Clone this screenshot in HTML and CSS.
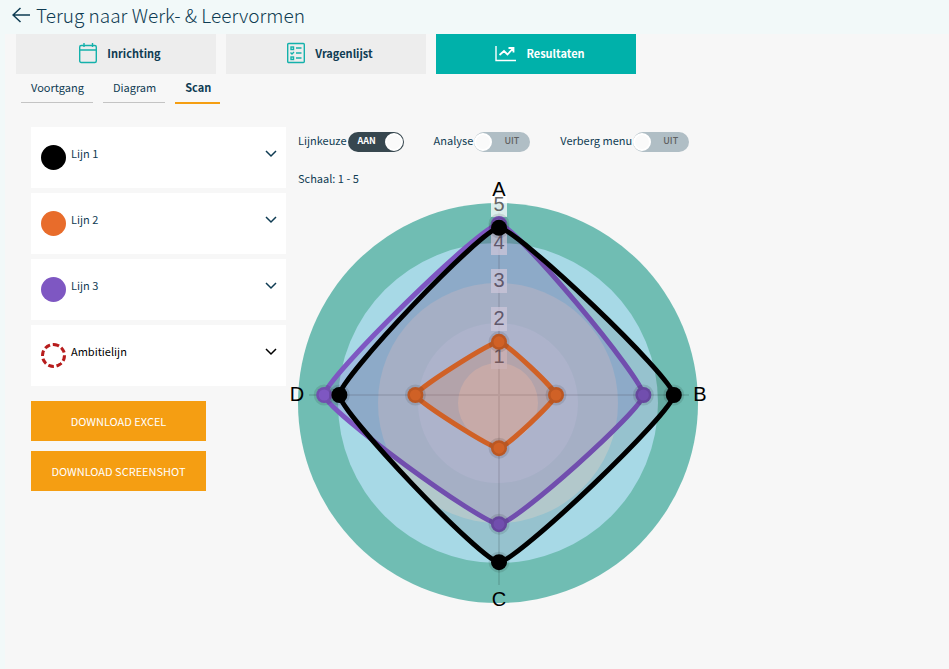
FILE: index.html
```html
<!DOCTYPE html>
<html lang="nl">
<head>
<meta charset="utf-8">
<meta name="viewport" content="width=device-width, initial-scale=1">
<title>Werk- &amp; Leervormen</title>
<link rel="stylesheet" href="styles.css">
</head>
<body>
<header class="topbar">
  <a class="back" href="#">
    <svg class="back-icon" viewBox="0 0 18 16" aria-hidden="true"><path d="M8.500 1 1 8l7.500 7M1 8h17"/></svg>
    <span>Terug naar Werk- &amp; Leervormen</span>
  </a>
</header>
<main class="page">
  <nav class="steps">
    <a class="step" href="#">
      <svg class="step-icon" viewBox="0 0 18 22" aria-hidden="true"><rect x=".7" y="3.500" width="16.600" height="17" rx="1.500"/><path d="M1 8h16M5 1v4M13.500 1v4"/></svg>
      Inrichting
    </a>
    <a class="step" href="#">
      <svg class="step-icon" viewBox="0 0 18 22" aria-hidden="true"><rect x=".7" y="1.500" width="16.600" height="19" rx="1"/><rect x="4" y="5" width="2.500" height="2.500"/><path d="M9 6h5.500M9 11h5.500M9 16h5.500M3.500 10.500l1.500 1.500 2-2"/><rect x="4" y="15" width="2.500" height="2.500"/></svg>
      Vragenlijst
    </a>
    <a class="step step-active" href="#" aria-current="page">
      <svg class="step-icon step-icon-wide" viewBox="0 0 21 18" aria-hidden="true"><path d="M1 2v14.500h20"/><path class="trend" d="M4.500 11 9 7l3.500 3.500L18 4.500M13.500 4H18.500v4.500"/></svg>
      Resultaten
    </a>
  </nav>
  <nav class="tabs">
    <a class="tab" href="#">Voortgang</a>
    <a class="tab" href="#">Diagram</a>
    <a class="tab tab-active" href="#" aria-current="page">Scan</a>
  </nav>
  <div class="content">
    <aside class="side">
      <button class="line" type="button"><span class="dot dot-black"></span><span class="line-name">Lijn 1</span><svg class="chevron" viewBox="0 0 12 8" aria-hidden="true"><path d="m1 1 5 5 5-5"/></svg></button>
      <button class="line" type="button"><span class="dot dot-orange"></span><span class="line-name">Lijn 2</span><svg class="chevron" viewBox="0 0 12 8" aria-hidden="true"><path d="m1 1 5 5 5-5"/></svg></button>
      <button class="line" type="button"><span class="dot dot-purple"></span><span class="line-name">Lijn 3</span><svg class="chevron" viewBox="0 0 12 8" aria-hidden="true"><path d="m1 1 5 5 5-5"/></svg></button>
      <button class="line line-dark" type="button"><span class="dot dot-ambition"></span><span class="line-name">Ambitielijn</span><svg class="chevron" viewBox="0 0 12 8" aria-hidden="true"><path d="m1 1 5 5 5-5"/></svg></button>
      <div class="actions">
        <button class="download" type="button">DOWNLOAD EXCEL</button>
        <button class="download" type="button">DOWNLOAD SCREENSHOT</button>
      </div>
    </aside>
    <section class="result">
      <div class="options">
        <label class="option">Lijnkeuze <span class="switch"><input type="checkbox" role="switch" checked><span class="on">AAN</span><span class="off">UIT</span></span></label>
        <label class="option">Analyse <span class="switch"><input type="checkbox" role="switch"><span class="on">AAN</span><span class="off">UIT</span></span></label>
        <label class="option">Verberg menu <span class="switch"><input type="checkbox" role="switch"><span class="on">AAN</span><span class="off">UIT</span></span></label>
      </div>
      <p class="scale">Schaal: 1 - 5</p>
      <svg id="radar" class="radar" viewBox="0 -10 430 440" role="img" aria-label="Radardiagram">
        <circle cx="212" cy="220" r="200" fill="#70bdb3"/>
        <circle cx="212" cy="220" r="160" fill="#a7d9e6"/>
        <circle cx="212" cy="220" r="120" fill="#c7dfe3"/>
        <circle cx="212" cy="220" r="80" fill="#d3e5eb"/>
        <circle cx="212" cy="220" r="40" fill="#f5f3e7"/>
        <path class="axis" d="M213 22v380M23 212h380"/>
        <g id="ticks"></g>
        <g class="names">
          <text x="213" y="13">A</text><text x="414" y="218">B</text><text x="213" y="423">C</text><text x="11" y="218">D</text>
        </g>
        <g id="series"></g>
      </svg>
    </section>
  </div>
</main>
<script src="radar.js"></script>
</body>
</html>
```
FILE: radar.js
```js
const NS = "http://www.w3.org/2000/svg";
const CENTER = { x: 213, y: 212 };
const UNIT = 38;
const TENSION = 0.1;

const series = [
  { color: "#7e57c2", fill: "rgba(126,87,194,.2)", width: 5, values: [4.5, 3.8, 3.4, 4.6] },
  { color: "#e86c2b", fill: "rgba(232,108,43,.2)", width: 5, values: [1.4, 1.5, 1.4, 2.2] },
  { color: "#000000", fill: "rgba(0,0,0,.1)", width: 5, values: [4.4, 4.6, 4.4, 4.2] }
];

function add(parent, name, attrs, text) {
  const node = document.createElementNS(NS, name);
  for (const key in attrs) node.setAttribute(key, attrs[key]);
  if (text) node.textContent = text;
  parent.appendChild(node);
}

function toPoint(value, i) {
  const angle = i * Math.PI / 2;
  return { x: CENTER.x + Math.sin(angle) * value * UNIT, y: CENTER.y - Math.cos(angle) * value * UNIT };
}

function controls(prev, cur, next) {
  const before = Math.hypot(cur.x - prev.x, cur.y - prev.y);
  const after = Math.hypot(next.x - cur.x, next.y - cur.y);
  const a = TENSION * before / (before + after);
  const b = TENSION * after / (before + after);
  return {
    into: { x: cur.x - a * (next.x - prev.x), y: cur.y - a * (next.y - prev.y) },
    out: { x: cur.x + b * (next.x - prev.x), y: cur.y + b * (next.y - prev.y) }
  };
}

function curve(points) {
  const n = points.length;
  const handles = points.map((p, i) => controls(points[(i + n - 1) % n], p, points[(i + 1) % n]));
  let d = `M${points[0].x} ${points[0].y}`;
  for (let i = 0; i < n; i++) {
    const j = (i + 1) % n;
    d += `C${handles[i].out.x} ${handles[i].out.y} ${handles[j].into.x} ${handles[j].into.y} ${points[j].x} ${points[j].y}`;
  }
  return d + "Z";
}

const ticks = document.getElementById("ticks");
for (let v = 1; v <= 5; v++) {
  const y = CENTER.y - v * UNIT;
  add(ticks, "rect", { class: "tick-back", x: CENTER.x - 8, y: y - 12, width: 16, height: 24 });
  add(ticks, "text", { class: "tick", x: CENTER.x, y: y + 6 }, String(v));
}

const layer = document.getElementById("series");
for (const s of series) {
  const points = s.values.map(toPoint);
  add(layer, "path", { d: curve(points), fill: s.fill, stroke: s.color, "stroke-width": s.width });
  for (const p of points) {
    add(layer, "circle", { class: "point", cx: p.x, cy: p.y, r: 8, fill: s.color });
  }
}
```
FILE: styles.css
```css
* { box-sizing: border-box; }

body {
  margin: 0;
  min-height: 100vh;
  background: #f2f9f9;
  color: #0f3c53;
  font: 11px/20px "Noto Sans CJK JP", "Noto Sans", sans-serif;
}

a { color: inherit; text-decoration: none; }
button { font: inherit; color: inherit; border: 0; cursor: pointer; }
svg { fill: none; stroke: currentColor; }

.topbar { height: 34px; padding: 0 12px 4px; display: flex; align-items: center; }
.back {
  display: flex;
  align-items: center;
  gap: 6px;
  font: 300 19px/28px "Noto Sans CJK JP Light", "Noto Sans CJK JP", sans-serif;
}
.back-icon { width: 18px; height: 16px; stroke-width: 1.5; }

.page { margin-left: 5px; min-height: calc(100vh - 34px); background: #f7f7f7; }

.steps { display: flex; gap: 10px; padding-left: 11px; }
.step {
  width: 200px;
  height: 40px;
  padding: 0 0 2px 8px;
  display: flex;
  align-items: center;
  justify-content: center;
  gap: 10px;
  background: #ededed;
  font-weight: 700;
}
.step-active { background: #00b1aa; color: #fff; }
.step-icon { width: 18px; height: 22px; color: #14b1ab; stroke-width: 1.4; }
.step-icon-wide { width: 21px; height: 18px; color: #fff; }
.trend { stroke-width: 1.8; }

.tabs { display: flex; align-items: flex-start; gap: 10px; padding-left: 16px; }
.tab { height: 29px; padding: 3px 9px 0 10px; border-bottom: 1px solid #c4c4c4; }
.tab-active { height: 30px; border-bottom: 2px solid #f59e12; font-weight: 700; }

.content { display: flex; align-items: flex-start; gap: 12px; padding: 23px 0 24px 26px; }

.side { width: 255px; flex: none; display: flex; flex-direction: column; gap: 5px; }
.line {
  height: 61px;
  padding: 0 9px 0 10px;
  display: flex;
  align-items: center;
  gap: 5px;
  background: #fff;
  text-align: left;
}
.line-dark { color: #000; }
.dot { width: 25px; height: 25px; border-radius: 50%; flex: none; }
.dot-black { background: #000; }
.dot-orange { background: #e86c2b; }
.dot-purple { background: #7e57c2; }
.dot-ambition { border: 3px dashed #b71c1c; }
.line-name { flex: 1; padding-bottom: 10px; }
.chevron { width: 12px; height: 8px; margin-bottom: 8px; stroke-width: 1.5; }

.actions { display: flex; flex-direction: column; align-items: flex-start; gap: 10px; padding-top: 10px; }
.download { width: 175px; height: 40px; padding: 0; background: #f59e12; color: #fff; }

.result { flex: 1; min-width: 0; }
.options { display: flex; gap: 30px; padding-top: 5px; }
.option { display: flex; align-items: flex-start; gap: 1px; line-height: 16px; }
.switch { position: relative; display: block; width: 56px; height: 20px; font-size: 9px; line-height: 18px; font-weight: 700; }
.switch input {
  appearance: none;
  display: block;
  margin: 0;
  width: 56px;
  height: 20px;
  border-radius: 10px;
  background: #b0bec5;
}
.switch input::before {
  content: "";
  box-sizing: border-box;
  display: block;
  width: 18px;
  height: 18px;
  border: 2px solid #fff;
  border-radius: 50%;
  background: #fafafa;
  transform: translate(0, 1px);
}
.switch input:checked { background: #37474f; }
.switch input:checked::before { transform: translate(37px, 1px); }
.on, .off { position: absolute; top: 0; display: none; pointer-events: none; }
.on { left: 10px; color: #fff; }
.off { right: 11px; color: #616161; font-weight: 500; }
input:checked ~ .on { display: block; }
input:not(:checked) ~ .off { display: block; }

.scale { margin: 16px 0 0; }

.radar { display: block; width: 430px; max-width: 100%; margin: -15px 0 0 -12px; stroke: none; }
.axis { stroke: rgba(0, 0, 0, .1); stroke-width: 2; }
.names, .tick { font: 20px "Liberation Sans", sans-serif; text-anchor: middle; }
.names { fill: #000; }
.tick { fill: #666; }
.tick-back { fill: rgba(255, 255, 255, .75); }
.point { stroke: rgba(0, 0, 0, .1); stroke-width: 5; }
```
